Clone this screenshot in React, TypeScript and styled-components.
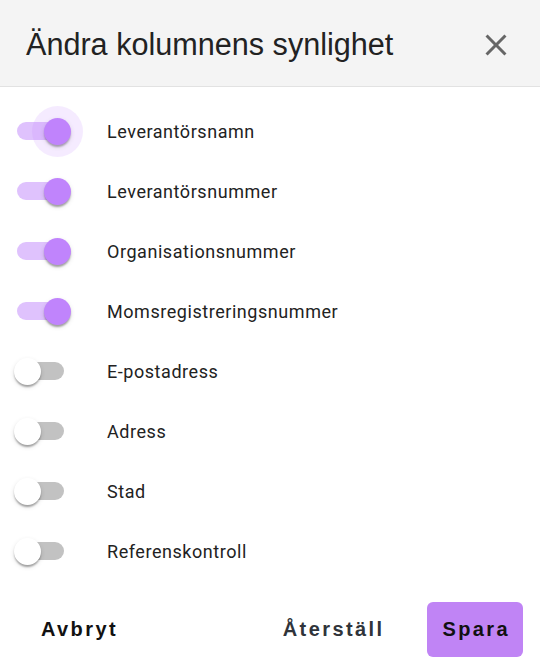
import React, { useState } from 'react';
import styled, { createGlobalStyle } from 'styled-components';

const GlobalStyle = createGlobalStyle`
  html, body { margin: 0; padding: 0; background: #fff; }
  body { font-family: Roboto, "Liberation Sans", Arial, sans-serif; }
`;

const Dialog = styled.div`
  width: 540px; height: 669px; background: #fff; display: flex; flex-direction: column;
`;

const Header = styled.div`
  height: 86px; background: #f4f4f4; border-bottom: 1px solid #e2e2e2;
  display: flex; align-items: center; justify-content: space-between; padding: 0 26px; box-sizing: content-box;
`;

const Title = styled.h2`
  margin: 0; font-family: "Liberation Sans", Arial, sans-serif; font-weight: 400; font-size: 30.6px; color: #222;
  padding-top: 2px;
`;

const CloseBtn = styled.button`
  background: none; border: none; padding: 4px 0 0; width: 36px; height: 40px; cursor: pointer;
  display: flex; align-items: center; justify-content: center;
`;

const List = styled.div`
  padding-top: 14px; display: flex; flex-direction: column;
`;

const Row = styled.label`
  height: 60px; display: flex; align-items: center; padding-left: 17px; cursor: pointer;
`;

const Track = styled.span<{ $on: boolean }>`
  position: relative; width: 47px; height: 18px; border-radius: 9px; flex: none;
  background: ${p => (p.$on ? '#dfc2fd' : '#c2c2c2')};
`;

const Thumb = styled.span<{ $on: boolean; $focus?: boolean }>`
  position: absolute; top: -4.5px; left: ${p => (p.$on ? '27px' : '-3.5px')};
  width: 27px; height: 27px; border-radius: 50%;
  background: ${p => (p.$on ? '#c084fc' : '#fff')};
  box-shadow: 0 3px 2px -1px rgba(0,0,0,0.2), 0 2px 2px 0 rgba(0,0,0,0.14), 0 2px 5px 0 rgba(0,0,0,0.12);
  &::before {
    content: ''; display: ${p => (p.$focus ? 'block' : 'none')};
    position: absolute; left: -12px; top: -12px; width: 51px; height: 51px; border-radius: 50%;
    background: rgba(192, 132, 252, 0.16);
  }
`;

const Label = styled.span`
  margin-left: 43px; font-size: 18px; letter-spacing: 0.55px; color: #222;
`;

const Footer = styled.div`
  margin-top: auto; height: 55px; padding: 0 17px 12px 26px;
  display: flex; align-items: center; gap: 30px;
`;

const Btn = styled.button<{ $primary?: boolean; $muted?: boolean }>`
  font-family: "Liberation Sans", Arial, sans-serif; font-weight: 700; font-size: 20px; letter-spacing: 2.4px;
  height: 55px; padding: 0 13px 0 15px; border: none; border-radius: 6px; cursor: pointer;
  background: ${p => (p.$primary ? '#c084f5' : 'transparent')};
  color: ${p => (p.$muted ? '#30343a' : '#111')};
  &:first-child { margin-right: auto; }
`;

const columns = [
  { name: 'Leverantörsnamn', on: true },
  { name: 'Leverantörsnummer', on: true },
  { name: 'Organisationsnummer', on: true },
  { name: 'Momsregistreringsnummer', on: true },
  { name: 'E-postadress', on: false },
  { name: 'Adress', on: false },
  { name: 'Stad', on: false },
  { name: 'Referenskontroll', on: false },
];

export default function App() {
  const [cols, setCols] = useState(columns);

  const toggle = (i: number) =>
    setCols(c => c.map((col, j) => (j === i ? { ...col, on: !col.on } : col)));

  return (
    <Dialog>
      <GlobalStyle />
      <Header>
        <Title>Ändra kolumnens synlighet</Title>
        <CloseBtn aria-label="Stäng">
          <svg width="36" height="36" viewBox="0 0 24 24" fill="#666">
            <path d="M19 6.41 17.59 5 12 10.59 6.41 5 5 6.41 10.59 12 5 17.59 6.41 19 12 13.41 17.59 19 19 17.59 13.41 12z" />
          </svg>
        </CloseBtn>
      </Header>

      <List>
        {cols.map((c, i) => (
          <Row key={c.name} onClick={() => toggle(i)}>
            <Track $on={c.on}>
              <Thumb $on={c.on} $focus={i === 0} />
            </Track>
            <Label>{c.name}</Label>
          </Row>
        ))}
      </List>

      <Footer>
        <Btn>Avbryt</Btn>
        <Btn $muted>Återställ</Btn>
        <Btn $primary>Spara</Btn>
      </Footer>
    </Dialog>
  );
}
